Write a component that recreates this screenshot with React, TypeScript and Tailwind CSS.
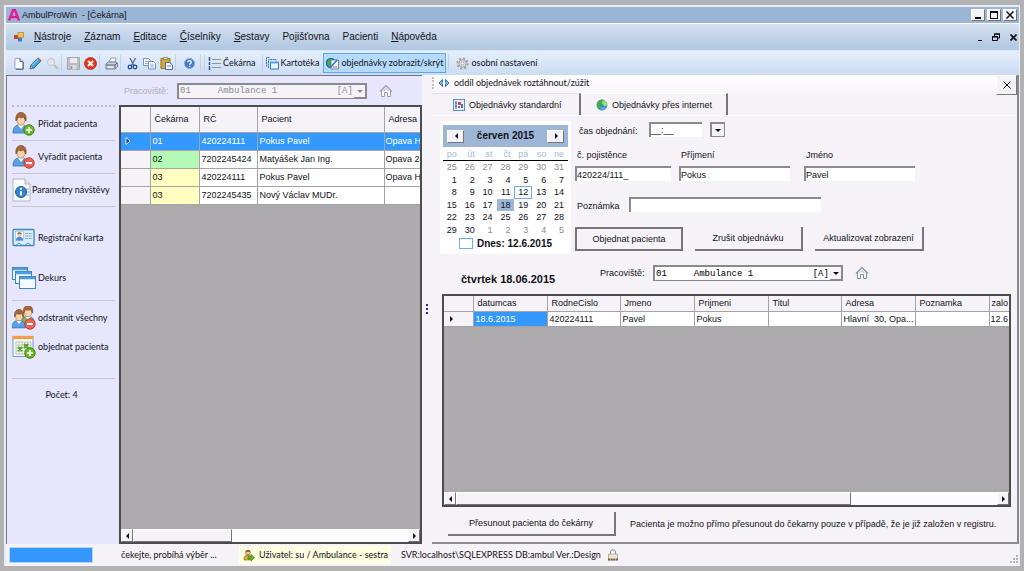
import React, { useState } from "react";

interface IconProps {
  className?: string;
}

const UI = "font-['Lato','Noto_Sans',sans-serif]";

const waiting = [
  { code: "01", rc: "420224111", name: "Pokus Pavel", address: "Opava H" },
  { code: "02", rc: "7202245424", name: "Matyášek Jan Ing.", address: "Opava 28" },
  { code: "03", rc: "420224111", name: "Pokus Pavel", address: "Opava H" },
  { code: "03", rc: "7202245435", name: "Nový Václav MUDr.", address: "" },
];

const days = [
  25, 26, 27, 28, 29, 30, 31, 1, 2, 3, 4, 5, 6, 7, 8, 9, 10, 11, 12, 13, 14, 15,
  16, 17, 18, 19, 20, 21, 22, 23, 24, 25, 26, 27, 28, 29, 30, 1, 2, 3, 4, 5,
];

const menu = [
  ["N", "ástroje"],
  ["Z", "áznam"],
  ["E", "ditace"],
  ["Č", "íselníky"],
  ["S", "estavy"],
  ["", "Pojišťovna"],
  ["", "Pacienti"],
  ["N", "ápověda"],
];

/* ---------- icons ---------- */

function PersonShape({ hair = "#a5683a", shirt = "#5b9fe6" }: { hair?: string; shirt?: string }) {
  return (
    <g>
      <path d="M1 21c0-5 2-8 6-8h3c4 0 6 3 6 8z" fill={shirt} stroke="#2f6fb8" strokeWidth="0.8" />
      <path d="M6 13l3 4 3-4z" fill="#fff" />
      <ellipse cx="9" cy="8" rx="4" ry="5.2" fill="#fbd3a8" stroke="#a06a3c" strokeWidth="0.6" />
      <path d="M4 9c-1-6 2-8.500 5-8.500s6 2.500 5 8.500c-1-1-1.500-3-2-4-2 1-4 1-6 0-.5 1-1 3-2 4z" fill={hair} stroke="#6d3e17" strokeWidth="0.6" />
    </g>
  );
}

function PlusBadge() {
  return (
    <g>
      <circle cx="17" cy="18" r="5.200" fill="#6cba25" stroke="#3d8510" />
      <path d="M17 15v6M14 18h6" stroke="#fff" strokeWidth="1.700" />
    </g>
  );
}

function MinusBadge() {
  return (
    <g>
      <circle cx="17" cy="18" r="5.200" fill="#ea6258" stroke="#c43a30" />
      <path d="M14 18h6" stroke="#fff" strokeWidth="2" />
    </g>
  );
}

function AddPersonIcon() {
  return (
    <svg viewBox="0 0 24 24" className="size-6">
      <PersonShape />
      <PlusBadge />
    </svg>
  );
}

function RemovePersonIcon() {
  return (
    <svg viewBox="0 0 24 24" className="size-6">
      <PersonShape />
      <MinusBadge />
    </svg>
  );
}

function RemoveAllIcon() {
  return (
    <svg viewBox="0 0 24 24" className="size-6">
      <g transform="translate(8 -1) scale(.9)">
        <PersonShape shirt="#7cb653" />
      </g>
      <g transform="translate(-1 3) scale(.9)">
        <PersonShape />
      </g>
      <g transform="translate(1 0)">
        <MinusBadge />
      </g>
    </svg>
  );
}

function InfoPageIcon() {
  return (
    <svg viewBox="0 0 24 24" className="size-6">
      <path d="M1 1h12l5 5v17H1z" fill="#fbfbfd" stroke="#b4b4bc" />
      <path d="M13 1v5h5" fill="#e4e4ea" stroke="#b4b4bc" />
      <path d="M14 11h3M15 14h2M14 17h3" stroke="#7fb0df" />
      <circle cx="9" cy="14" r="5.500" fill="#3583cf" stroke="#1f5fa6" />
      <path d="M9 13v4.500" stroke="#fff" strokeWidth="1.800" />
      <circle cx="9" cy="10.800" r="1.100" fill="#fff" />
    </svg>
  );
}

function CardIcon() {
  return (
    <svg viewBox="0 0 24 24" className="size-6">
      <rect x="1" y="3.500" width="21" height="16" rx="1" fill="#d9edfb" stroke="#3f86c4" strokeWidth="1.300" />
      <rect x="3.500" y="5.500" width="8" height="9" fill="#fff" stroke="#8ab8dd" strokeWidth="0.6" />
      <path d="M4 14.500c0-3 1.500-4 3.500-4s3.500 1 3.500 4z" fill="#4d90d6" />
      <circle cx="7.500" cy="8.800" r="2" fill="#f4c593" />
      <path d="M5.300 8.500c0-3 4.400-3 4.400 0-1-1.300-3.400-1.300-4.400 0z" fill="#6d3e17" />
      <path d="M13 7.500h7M13 10h7M13 12.500h7" stroke="#86abc9" strokeDasharray="3 .6" />
      <path d="M5 19.500c0-3 4-3 4 0zM14 19.500c0-3 4-3 4 0z" fill="#e6e6ff" stroke="#3f86c4" />
    </svg>
  );
}

function WindowsIcon() {
  return (
    <svg viewBox="0 0 24 24" className="size-6">
      <g fill="#f2f9ff" stroke="#3c87c8">
        <rect x="0.500" y="1.500" width="15" height="12" />
        <path d="M1 3h14" stroke="#4e9ede" strokeWidth="2.500" />
        <rect x="3.500" y="5.500" width="16" height="12" />
        <path d="M4 7h15" stroke="#4e9ede" strokeWidth="2.500" />
        <rect x="7.500" y="10.500" width="16" height="12" />
        <path d="M8 12h15" stroke="#4e9ede" strokeWidth="2.500" />
      </g>
    </svg>
  );
}

function CardFileIcon() {
  return (
    <svg viewBox="0 0 13 13" className="size-[13px]" fill="#eaf5ff" stroke="#2f78b8">
      <path d="M.5 9.500V.5h3M2.500 11V2.500h7.500v2" fill="none" strokeDasharray="2 .5" />
      <path d="M4.500 5.500h8v6.500h-8z" />
      <path d="M4 5.500h9" stroke="#4e9ede" strokeWidth="1.800" />
    </svg>
  );
}

function CalendarAddIcon() {
  return (
    <svg viewBox="0 0 24 24" className="size-6">
      <rect x="1" y="1.500" width="20" height="20" fill="#f3f9fd" stroke="#6fa2c9" />
      <path d="M0.500 2.500h21" stroke="#f0a04b" strokeWidth="3.400" />
      <path d="M4 7h15v12H4zM4 10h15M4 13h15M4 16h15M7 7v12M10 7v12M13 7v12M16 7v12" fill="#fff" stroke="#a9b9a8" strokeWidth="0.8" />
      <path d="M6 12l4 4M10 12l-4 4M12 9l4 4M16 9l-4 4" stroke="#55a31d" strokeWidth="2" />
      <g transform="translate(1 0)">
        <PlusBadge />
      </g>
    </svg>
  );
}

function HouseIcon({ className = "" }: IconProps) {
  return (
    <svg viewBox="0 0 14 14" className={`size-3.5 shrink-0 ${className}`} fill="none" stroke="currentColor">
      <path d="M1 7.500L7 1.500l6 6" strokeWidth="1.200" />
      <path d="M2.500 7v5.500h3V8.500h3v4h3V7" fill="#fff" />
      <path d="M4 7.500l3-3 3 3" strokeWidth="0.6" />
    </svg>
  );
}

function GlobeIcon({ className = "" }: IconProps) {
  return (
    <svg viewBox="0 0 14 14" className={className}>
      <circle cx="7" cy="7" r="6" fill="#2c86d4" stroke="#3a7fb8" strokeWidth="0.6" />
      <path d="M2 3c2-2 5-2.500 6-1.500L7 4l1 2-3 1 2 3-2 3C1 11 .5 6 2 3z" fill="#3fae4c" />
      <path d="M8 1.500c4 0 5.500 4 4.500 7L9 8 7 5z" fill="#a6dc6f" />
      <path d="M5 10l5-1 2 1c-1 2-3 3.500-6 3z" fill="#57a5e6" />
    </svg>
  );
}

function PageIcon() {
  return (
    <svg viewBox="0 0 13 13" className="size-[13px]">
      <path d="M3 1.500h5l3 3v7.500H3z" fill="#fff" stroke="#9aa2c4" />
      <path d="M11.200 5v7.200H4M8 1.500v3h3" fill="none" stroke="#4c5686" />
    </svg>
  );
}

function PencilIcon() {
  return (
    <svg viewBox="0 0 13 13" className="size-[13px]">
      <path d="M1 12l1-4 7-7 3 3-7 7z" fill="#3aa3ea" stroke="#17609f" strokeWidth="0.8" />
      <path d="M3 8.500l6.500-6.500" stroke="#b8e2fb" />
      <path d="M8.500 1.500l1-1 3 3-1 1z" fill="#e14b42" />
      <path d="M1 12l.8-3 2.200 2.200z" fill="#f6d19c" stroke="#5f432a" strokeWidth="0.5" />
    </svg>
  );
}

function SearchIcon() {
  return (
    <svg viewBox="0 0 13 13" className="size-[13px]">
      <circle cx="5" cy="5" r="3.500" fill="#e5e6ea" stroke="#c8cad2" strokeWidth="1.300" />
      <path d="M8 8l4 4" stroke="#c4bebc" strokeWidth="2.200" />
    </svg>
  );
}

function SaveIcon() {
  return (
    <svg viewBox="0 0 13 13" className="size-[13px]">
      <path d="M.5.5h12v12H.5z" fill="#bcbec3" stroke="#a6a8ad" />
      <path d="M3 1h7v5H3z" fill="#ececee" />
      <path d="M3.500 8h6v4.500h-6z" fill="#dadbdf" />
      <path d="M4.500 9v3" stroke="#95979e" strokeWidth="1.500" />
    </svg>
  );
}

function StopIcon() {
  return (
    <svg viewBox="0 0 13 13" className="size-[13px]">
      <circle cx="6.500" cy="6.500" r="6" fill="#e8341f" stroke="#b51f10" strokeWidth="0.7" />
      <path d="M4 4l5 5M9 4l-5 5" stroke="#fff" strokeWidth="2" />
    </svg>
  );
}

function PrinterIcon() {
  return (
    <svg viewBox="0 0 13 13" className="size-[13px]">
      <path d="M4 5l2-4h5l-1 4z" fill="#fff" stroke="#7e88a8" strokeWidth="0.8" />
      <path d="M1 7l2-2h8l1.500 1v4L10 12H1z" fill="#c8cdd8" stroke="#626b86" strokeWidth="0.8" />
      <path d="M1 8h9v3.500M10 8l2-2" fill="none" stroke="#5c6580" />
      <path d="M3 10h5" stroke="#fff" />
    </svg>
  );
}

function CutIcon() {
  return (
    <svg viewBox="0 0 13 13" className="size-[13px]">
      <path d="M4 1l4 8M9.500 1l-4 8" stroke="#48649b" strokeWidth="1.200" />
      <circle cx="4" cy="10" r="1.800" fill="none" stroke="#24499b" strokeWidth="1.300" />
      <circle cx="9" cy="10" r="1.800" fill="none" stroke="#24499b" strokeWidth="1.300" />
    </svg>
  );
}

function CopyIcon() {
  return (
    <svg viewBox="0 0 13 13" className="size-[13px]" fill="#f3f8ff" stroke="#7391c6">
      <path d="M.5 1.500h5l2 2v5h-7z" />
      <path d="M2 4.500h3M2 6.500h3" strokeWidth="0.700" />
      <path d="M5.500 4.500h5l2 2v5.500h-7z" />
      <path d="M7 8h4M7 10h4" strokeWidth="0.700" />
    </svg>
  );
}

function PasteIcon() {
  return (
    <svg viewBox="0 0 13 13" className="size-[13px]">
      <path d="M1 1.500h9v10H1z" fill="#d6a83c" stroke="#94701c" />
      <path d="M3.500.5h4v2h-4z" fill="#e9e5d0" stroke="#77725c" strokeWidth="0.700" />
      <path d="M5.500 5.500h4l3 2.500v4.500h-7z" fill="#eef4ff" stroke="#4f6ba8" />
      <path d="M7 9h4" stroke="#6e89c2" />
    </svg>
  );
}

function HelpIcon() {
  return (
    <svg viewBox="0 0 13 13" className="size-[13px]">
      <circle cx="6.500" cy="6.500" r="5" fill="#3e78d6" stroke="#88a6d8" />
      <path d="M4.800 5.200c0-2.200 3.500-2.200 3.500 0 0 1.200-1.700 1.200-1.700 2.500M6.600 8.800v1.200" fill="none" stroke="#fff" strokeWidth="1.300" />
    </svg>
  );
}

function ListIcon() {
  return (
    <svg viewBox="0 0 13 13" className="size-[13px]">
      <path d="M1.500 0v4M1.500 5v3M1.500 9v4" stroke="#2a57a8" strokeWidth="1.500" />
      <path d="M4 2.500h9M4 6.500h9M4 10.500h9" stroke="#8c94a0" />
    </svg>
  );
}

function ChartPageIcon() {
  return (
    <svg viewBox="0 0 13 13" className="size-[13px]">
      <circle cx="5" cy="6" r="4.600" fill="#49a948" stroke="#1d6bab" strokeWidth="1.200" />
      <path d="M5 3h7.500v9H5z" fill="#f6f9ff" stroke="#54719f" strokeWidth="0.800" />
      <path d="M4 11l7-8" stroke="#2a7fcf" strokeWidth="1.700" />
      <path d="M7 10h4" stroke="#d3584a" />
    </svg>
  );
}

function GearIcon() {
  return (
    <svg viewBox="0 0 13 13" className="size-[13px]">
      <circle cx="6.500" cy="6.500" r="5" fill="none" stroke="#a0a0a2" strokeWidth="2.200" strokeDasharray="2 1.900" />
      <circle cx="6.500" cy="6.500" r="3.700" fill="#e3e3e5" stroke="#a2a2a5" />
      <circle cx="6.500" cy="6.500" r="1.600" fill="#fff" stroke="#a2a2a5" />
    </svg>
  );
}

function StandardIcon() {
  return (
    <svg viewBox="0 0 12 12" className="size-3">
      <rect x="0.500" y="0.500" width="11" height="11" fill="#e8f2fb" stroke="#5a93c9" />
      <path d="M3 2v8M2 4h2M2 7h2" stroke="#47608c" />
      <path d="M5 3h3v3H5z" fill="#cb4b55" />
      <path d="M5 7h2v2H5zM8 5h2v4H8z" fill="#5d6da8" />
    </svg>
  );
}

function UserGoIcon() {
  return (
    <svg viewBox="0 0 12 12" className="size-3">
      <path d="M1 11c0-4 1-5 4-5s4 1 4 5z" fill="#d9a93a" stroke="#8a6a1c" strokeWidth="0.600" />
      <circle cx="5" cy="3.500" r="2.300" fill="#f6cfa0" stroke="#7d4e22" strokeWidth="0.700" />
      <path d="M2.700 3.500c0-3.500 4.600-3.500 4.600 0C6 2.500 4 2.500 2.700 3.500z" fill="#7d4e22" />
      <path d="M5 7.500h3v-2l3.700 3.200L8 12v-2H5z" fill="#62b422" stroke="#3c8411" strokeWidth="0.600" />
    </svg>
  );
}

function LockIcon() {
  return (
    <svg viewBox="0 0 12 12" className="size-3">
      <path d="M3.500 5V3c0-3 5-3 5 0v2" fill="none" stroke="#8b8b8b" />
      <path d="M1.500 5h9v6h-9z" fill="#eee3d8" stroke="#a08f86" strokeWidth="0.700" />
      <path d="M1 10.500h10" stroke="#7a5b3a" strokeWidth="2" strokeDasharray="2 .7" />
    </svg>
  );
}

function Arrow({ dir }: { dir: "left" | "right" | "down" }) {
  const d = { left: "M5 0v6L2 3z", right: "M2 0v6l3-3z", down: "M0 2h6L3 5z" }[dir];
  return (
    <svg viewBox="0 0 6 6" className="size-1.5" fill="currentColor">
      <path d={d} />
    </svg>
  );
}

function Cross({ className = "size-2" }: IconProps) {
  return (
    <svg viewBox="0 0 8 8" className={className} stroke="currentColor" fill="none">
      <path d="M.5.5l7 7M7.500.5l-7 7" />
    </svg>
  );
}

/* ---------- small controls ---------- */

const raised =
  "border border-t-white border-l-white border-r-[#77757a] border-b-[#77757a] bg-[#f6f3f8] flex items-center justify-center";

const sunken = "h-[15px] border-t-2 border-l-2 border-[#8b898d] bg-white outline-none";

function Sep() {
  return <span className="h-4 w-1 shrink-0 border-l border-[#c3cfe2]" />;
}

function IconButton({ label, children }: { label: string; children: React.ReactNode }) {
  return (
    <button aria-label={label} className="flex w-[17px] shrink-0 items-center justify-center">
      {children}
    </button>
  );
}

function FormButton({ children, className = "" }: { children: React.ReactNode; className?: string }) {
  return (
    <button className={`h-6 border-[#77757a] bg-[#f6f3f8] text-center ${className}`}>
      {children}
    </button>
  );
}

function Field({ id, label, value, className = "" }: { id: string; label: string; value: string; className?: string }) {
  return (
    <div className={`flex flex-col gap-[5px] ${className}`}>
      <label htmlFor={id} className="pl-0.5">
        {label}
      </label>
      <input id={id} defaultValue={value} className={`w-full ${sunken}`} />
    </div>
  );
}

function WorkplaceSelect({ id, muted }: { id: string; muted?: boolean }) {
  return (
    <div className={`relative ${muted ? "text-[#8d8b90]" : "text-black"}`}>
      <select
        id={id}
        disabled={muted}
        className={`block h-4 w-[190px] appearance-none border-2 border-r border-b border-[#8b898d] pl-px font-['Liberation_Mono',monospace] text-[9px] leading-3 opacity-100 outline-none ${
          muted ? "bg-[#f6f3f8]" : "bg-white"
        }`}
      >
        <option>{"01" + "\u00a0".repeat(5) + "Ambulance 1" + "\u00a0".repeat(11) + "[A]"}</option>
      </select>
      <span className="pointer-events-none absolute top-0.5 right-px flex h-[13px] w-3 items-center justify-center border-r border-b border-[#8b898d] bg-[#f6f3f8]">
        <Arrow dir="down" />
      </span>
    </div>
  );
}

function ScrollBar({ thumb }: { thumb: string }) {
  return (
    <div className="flex h-[13px] shrink-0 bg-[#fcfbfd]">
      <button aria-label="Posunout vlevo" className={`w-3 ${raised}`}>
        <Arrow dir="left" />
      </button>
      <div className="flex-1">
        <div className={`h-full ${thumb} ${raised}`} />
      </div>
      <button aria-label="Posunout vpravo" className={`w-3 ${raised}`}>
        <Arrow dir="right" />
      </button>
    </div>
  );
}

function SideButton({ icon, children, className = "" }: { icon: React.ReactNode; children: React.ReactNode; className?: string }) {
  return (
    <button className={`flex w-full items-center gap-0.5 text-left whitespace-nowrap ${className}`}>
      <span className="shrink-0">{icon}</span>
      {children}
    </button>
  );
}

/* ---------- sections ---------- */

function TitleBar() {
  return (
    <header className="flex h-4 shrink-0 items-center bg-[#9bb5d4] pr-0.5 pl-0.5">
      <svg viewBox="0 0 12 12" className="size-3" fill="none" stroke="#e6189a" strokeWidth="2.400">
        <path d="M1 11.500L5 1.200h2l4 10.300M3 8h6" />
      </svg>
      <h1 className="ml-0.5 flex-1 whitespace-pre">AmbulProWin  - [Čekárna]</h1>
      <div className="flex gap-0.5">
        <button aria-label="Minimalizovat" className={`h-3 w-3.5 ${raised}`}>
          <span className="mt-1.5 h-0.5 w-1.5 bg-black" />
        </button>
        <button aria-label="Maximalizovat" className={`h-3 w-3.5 ${raised}`}>
          <span className="size-2 border border-t-2 border-black" />
        </button>
        <button aria-label="Zavřít" className={`h-3 w-3.5 ${raised}`}>
          <Cross className="size-2 stroke-[1.5]" />
        </button>
      </div>
    </header>
  );
}

function MenuBar() {
  return (
    <nav className="flex h-[27px] shrink-0 items-center border-t border-white bg-linear-to-b from-[#d5e1f1] to-[#afc7e1] pr-0.5 pl-2 text-[10px]">
      <svg viewBox="0 0 10 10" className="mr-2.5 size-2.5">
        <rect x="0" y="3" width="4" height="4" fill="#c8452d" />
        <rect x="4" y="0.500" width="5.500" height="5" fill="#f4c94b" stroke="#9c7b1c" strokeWidth="0.600" />
        <rect x="4" y="6" width="4" height="3.500" fill="#4978c9" />
      </svg>
      <div className="flex flex-1 gap-[13px]">
        {menu.map(([key, rest]) => (
          <button key={key + rest}>
            <span className="underline">{key}</span>
            {rest}
          </button>
        ))}
      </div>
      <div className="flex items-center gap-2.5">
        <button aria-label="Minimalizovat okno" className="flex h-2 items-end">
          <span className="h-px w-1 bg-black" />
        </button>
        <button aria-label="Obnovit okno">
          <svg viewBox="0 0 8 8" className="size-2" fill="none" stroke="#000">
            <path d="M2.500 3V1h5v4H6M.5 3.500h5v4h-5zM2 1h6M0 4h6" />
          </svg>
        </button>
        <button aria-label="Zavřít okno">
          <Cross className="size-[7px] stroke-2" />
        </button>
      </div>
    </nav>
  );
}

function ToolBar() {
  return (
    <div className={`flex h-[25px] shrink-0 items-center border-t border-[#dbe6f5] bg-linear-to-b from-[#e6effc] to-[#cadcf3] pl-1 ${UI}`}>
      <IconButton label="Nový"><PageIcon /></IconButton>
      <IconButton label="Upravit"><PencilIcon /></IconButton>
      <IconButton label="Hledat"><SearchIcon /></IconButton>
      <Sep />
      <IconButton label="Uložit"><SaveIcon /></IconButton>
      <IconButton label="Storno"><StopIcon /></IconButton>
      <Sep />
      <IconButton label="Tisk"><PrinterIcon /></IconButton>
      <Sep />
      <IconButton label="Vyjmout"><CutIcon /></IconButton>
      <IconButton label="Kopírovat"><CopyIcon /></IconButton>
      <IconButton label="Vložit"><PasteIcon /></IconButton>
      <Sep />
      <span className="mx-0.5 flex"><IconButton label="Pomoc"><HelpIcon /></IconButton></span>
      <Sep />
      <Sep />
      <button className="mr-1.5 flex items-center gap-0.5"><ListIcon />Čekárna</button>
      <Sep />
      <button className="mr-1 flex items-center gap-0.5"><CardFileIcon />Kartotéka</button>
      <button className="mr-0.5 flex h-5 items-center gap-0.5 border border-[#5aa9ea] bg-[#b5dafb] px-0.5">
        <ChartPageIcon />
        objednávky zobrazit/skrýt
      </button>
      <Sep />
      <button className="ml-1 flex items-center gap-0.5"><GearIcon />osobní nastavení</button>
    </div>
  );
}

function SideBar() {
  return (
    <aside className={`flex w-[113px] shrink-0 flex-col border-t border-l border-[#77757a] bg-[#e6e6ff] pt-[29px] pr-1 pl-[5px] ${UI}`}>
      <div className="border-t-2 border-dotted border-[#bcbcd0]" />
      <SideButton icon={<AddPersonIcon />} className="h-[33px]">Přidat pacienta</SideButton>
      <div className="border-t border-[#c6c6d2]" />
      <SideButton icon={<RemovePersonIcon />} className="h-8">Vyřadit pacienta</SideButton>
      <div className="border-t border-[#c6c6d2]" />
      <button className="flex h-8 items-center text-left whitespace-nowrap">
        <span className="-mr-1 shrink-0"><InfoPageIcon /></span>
        Parametry návštěvy
      </button>
      <div className="border-t border-[#c6c6d2]" />
      <SideButton icon={<CardIcon />} className="mt-[15px] h-8">Registrační karta</SideButton>
      <SideButton icon={<WindowsIcon />} className="mt-2 h-8">Dekurs</SideButton>
      <div className="mt-1.5 border-t border-[#c6c6d2]" />
      <SideButton icon={<RemoveAllIcon />} className="mt-0.5 h-[30px]">odstranit všechny</SideButton>
      <SideButton icon={<CalendarAddIcon />} className="h-7">objednat pacienta</SideButton>
      <div className="mt-[17px] border-t border-[#c6c6d2]" />
      <p className="mt-2.5 pr-1 text-center">Počet: 4</p>
    </aside>
  );
}

function WaitingRoom() {
  const [selected, setSelected] = useState(0);
  return (
    <section className="flex w-[303px] shrink-0 flex-col border-t border-[#77757a]">
      <div className="flex h-[29px] shrink-0 items-center bg-[#e6e6ff] pl-[5px]">
        <label htmlFor="workplace-left" className="w-[53px] text-[#b1afbb]">Pracoviště:</label>
        <WorkplaceSelect id="workplace-left" muted />
        <HouseIcon className="ml-3 text-[#a09da6]" />
      </div>
      <div className="flex min-h-0 flex-1 flex-col border-2 border-[#4c4b4e] bg-[#acaaac]">
        <div className="min-h-0 flex-1 overflow-hidden">
          <table className="w-full table-fixed border-collapse text-left">
            <colgroup>
              <col className="w-[29px]" />
              <col className="w-[49px]" />
              <col className="w-[58px]" />
              <col className="w-[127px]" />
              <col />
            </colgroup>
            <thead>
              <tr className="h-[25px] bg-[#f6f3f8]">
                <th className="border-r border-b border-[#a5a3a8]" />
                <th className="border-r border-b border-[#a5a3a8] pl-1 font-normal">Čekárna</th>
                <th className="border-r border-b border-[#a5a3a8] pl-1 font-normal">RČ</th>
                <th className="border-r border-b border-[#a5a3a8] pl-1 font-normal">Pacient</th>
                <th className="border-b border-[#a5a3a8] pl-1 font-normal">Adresa</th>
              </tr>
            </thead>
            <tbody>
              {waiting.map((row, i) => (
                <tr
                  key={i}
                  onClick={() => setSelected(i)}
                  className={`h-[18px] whitespace-nowrap ${i === selected ? "bg-[#3399ff] text-white" : "bg-white"}`}
                >
                  <td className={`border-r border-b border-[#a5a3a8] pl-1 ${i === selected ? "" : "bg-[#f6f3f8]"}`}>
                    {i === selected && (
                      <svg viewBox="0 0 6 8" className="h-2 w-1.5" fill="#1b3c6e" stroke="#fff" strokeWidth="0.800">
                        <path d="M1 .5v7L5 4z" />
                      </svg>
                    )}
                  </td>
                  <td
                    className={`border-r border-b border-[#a5a3a8] pl-0.5 ${
                      i === selected ? "" : row.code === "02" ? "bg-[#b4fab4]" : "bg-[#ffffc0]"
                    }`}
                  >
                    {row.code}
                  </td>
                  <td className="border-r border-b border-[#a5a3a8] pl-0.5">{row.rc}</td>
                  <td className="border-r border-b border-[#a5a3a8] pl-0.5">{row.name}</td>
                  <td className="border-b border-[#a5a3a8] pl-px">{row.address}</td>
                </tr>
              ))}
            </tbody>
          </table>
        </div>
        <ScrollBar thumb="w-[99px]" />
      </div>
    </section>
  );
}

function MonthCalendar() {
  return (
    <div className="h-[133px] w-[131px] shrink-0 bg-white px-[3px] pt-1">
      <div className="flex h-[22px] items-center justify-between bg-[#9db6d6] px-1 text-[10px] font-bold">
        <button aria-label="Předchozí měsíc" className={`h-[13px] w-[17px] ${raised}`}><Arrow dir="left" /></button>
        červen 2015
        <button aria-label="Další měsíc" className={`h-[13px] w-[17px] ${raised}`}><Arrow dir="right" /></button>
      </div>
      <div className="grid h-[14px] grid-cols-7 items-end border-b border-black text-right text-[#a3bbdb]">
        {["po", "út", "st", "čt", "pá", "so", "ne"].map((d) => (
          <span key={d} className="pr-1">{d}</span>
        ))}
      </div>
      <div className="grid h-[75px] grid-cols-7 grid-rows-6 text-right">
        {days.map((d, i) => (
          <button
            key={i}
            className={`flex items-center justify-end pr-1 ${i < 7 || i > 36 ? "text-[#8c8a8e]" : ""} ${
              i === 18 ? "border border-[#6cb0ee] pr-[3px]" : ""
            } ${i === 24 ? "bg-[#9db6d6]" : ""}`}
          >
            {d}
          </button>
        ))}
      </div>
      <div className="flex h-[15px] items-center justify-center gap-1 text-[10px] font-bold">
        <span className="h-[11px] w-3.5 border border-[#6cb0ee]" />
        Dnes: 12.6.2015
      </div>
    </div>
  );
}

const apptColumns = ["datumcas", "RodneCislo", "Jmeno", "Prijmeni", "Titul", "Adresa", "Poznamka"];
const apptRow = ["18.6.2015", "420224111", "Pavel", "Pokus", "", "Hlavní  30, Opa...", ""];

function Appointments() {
  return (
    <section className="flex min-w-0 flex-1 flex-col border-r-2 border-b-2 border-[#8b898d] bg-[#f6f3f8]">
      <div className={`flex h-[18px] shrink-0 items-start justify-between bg-linear-to-b from-white to-[#f8f5fa] ${UI}`}>
        <button className="flex h-4 items-center gap-1">
          <span className="h-3 border-l-2 border-dotted border-[#c0bdc6]" />
          <svg viewBox="0 0 12 8" className="h-2 w-3" fill="#8fc0ee" stroke="#2a6cb5">
            <path d="M4.500.5L1 4l3.500 3.500V5L3.500 4l1-1zM7.500.5L11 4 7.500 7.500V5l1-1-1-1z" />
          </svg>
          oddíl objednávek roztáhnout/zúžit
        </button>
        <button aria-label="Zavřít oddíl" className={`h-5 w-[21px] ${raised}`}>
          <Cross />
        </button>
      </div>
      <div className="flex h-[23px] shrink-0 items-stretch border-b border-[#fdfcfe]">
        <button className="flex w-[149px] items-center gap-1 border-t border-r-2 border-t-[#e4e1e6] border-r-[#77757a] pl-[21px]">
          <StandardIcon />
          Objednávky standardní
        </button>
        <button className="flex w-[147px] items-center gap-1 border-t border-r-2 border-t-white border-r-[#77757a] pl-[15px]">
          <GlobeIcon className="size-3" />
          Objednávky přes internet
        </button>
      </div>

      <div className="flex flex-1 flex-col pt-[5px] pr-1.5 pl-2">
        <div className="flex shrink-0 gap-1">
          <MonthCalendar />
          <form className="flex flex-col" onSubmit={(e) => e.preventDefault()}>
            <div className="flex h-4 items-center">
              <label htmlFor="time" className="w-[74px] pt-1 pl-1">čas objednání:</label>
              <input id="time" defaultValue="__:__" className={`w-[53px] ${sunken}`} />
              <button aria-label="Vybrat čas" className="ml-2 flex size-[15px] items-center justify-center border-2 border-r border-b border-[#8b898d] text-black">
                <Arrow dir="down" />
              </button>
            </div>
            <div className="mt-3 flex">
              <Field id="insurance" label="č. pojistěnce" value="420224/111_" className="w-[96px]" />
              <Field id="surname" label="Příjmení" value="Pokus" className="ml-2 w-[111px]" />
              <Field id="firstname" label="Jméno" value="Pavel" className="ml-3.5 w-[111px]" />
            </div>
            <div className="mt-4 flex items-center">
              <label htmlFor="note" className="w-[54px] pt-0.5 pl-0.5">Poznámka</label>
              <input id="note" className={`w-[192px] ${sunken}`} />
            </div>
            <div className="mt-[15px] flex gap-3">
              <FormButton className="w-[108px] border-2 border-[#4c4b4e]">Objednat pacienta</FormButton>
              <FormButton className="w-[108px] border-r-2 border-b-2">Zrušit objednávku</FormButton>
              <FormButton className="w-[109px] border-r-2 border-b-2">Aktualizovat zobrazení</FormButton>
            </div>
          </form>
        </div>

        <div className="mt-2.5 flex h-[18px] shrink-0 items-center">
          <h2 className="w-[160px] pt-3 pl-[21px] text-[11px] font-bold">čtvrtek 18.06.2015</h2>
          <label htmlFor="workplace" className="w-[53px]">Pracoviště:</label>
          <WorkplaceSelect id="workplace" />
          <HouseIcon className="ml-3 text-[#7f90a5]" />
        </div>

        <div className="mt-3 ml-0.5 flex min-h-0 flex-1 flex-col border-2 border-[#4c4b4e] bg-[#acaaac]">
          <div className="min-h-0 flex-1 overflow-hidden">
            <table className="w-full table-fixed border-collapse text-left">
              <colgroup>
                <col className="w-[29px]" />
                <col className="w-[74px]" />
                <col className="w-[73px]" />
                <col className="w-[74px]" />
                <col className="w-[74px]" />
                <col className="w-[73px]" />
                <col className="w-[74px]" />
                <col className="w-[74px]" />
                <col />
              </colgroup>
              <thead>
                <tr className="h-[15px] bg-[#f6f3f8]">
                  <th className="border-r border-b border-[#a5a3a8]" />
                  {apptColumns.map((c) => (
                    <th key={c} className="border-r border-b border-[#a5a3a8] pl-1 font-normal">{c}</th>
                  ))}
                  <th className="border-b border-[#a5a3a8] pl-0.5 font-normal">zalo</th>
                </tr>
              </thead>
              <tbody>
                <tr className="h-[15px] bg-white whitespace-pre">
                  <td className="border-r border-b border-[#a5a3a8] bg-[#f6f3f8] pl-1"><Arrow dir="right" /></td>
                  {apptRow.map((v, i) => (
                    <td key={i} className={`border-r border-b border-[#a5a3a8] pl-0.5 ${i === 0 ? "bg-[#3399ff] text-white" : ""}`}>
                      {v}
                    </td>
                  ))}
                  <td className="border-b border-[#a5a3a8] pl-px">12.6</td>
                </tr>
              </tbody>
            </table>
          </div>
          <ScrollBar thumb="w-[73%]" />
        </div>

        <div className="mt-[5px] mb-1.5 ml-2 flex shrink-0 items-center gap-3.5">
          <FormButton className="w-[168px] border-r-2 border-b-2">Přesunout pacienta do čekárny</FormButton>
          <p>Pacienta je možno přímo přesunout do čekarny pouze v případě, že je již založen v registru.</p>
        </div>
      </div>
    </section>
  );
}

function StatusBar() {
  return (
    <footer className={`relative flex h-[22px] shrink-0 items-center pl-[3px] ${UI}`}>
      <div role="progressbar" aria-label="Průběh" className="h-4 w-[84px] border border-[#b9d4ee] bg-[#3399ff]" />
      <span className="ml-7 w-[118px]">čekejte, probíhá výběr ...</span>
      <span className="flex h-[18px] w-[152px] items-center gap-1 bg-[#ffffe1] pl-1"><UserGoIcon />Uživatel: su / Ambulance - sestra</span>
      <span className="mr-1.5 ml-2.5">SVR:localhost\SQLEXPRESS DB:ambul Ver.:Design</span>
      <LockIcon />
      <svg viewBox="0 0 9 9" className="absolute right-0 bottom-0.5 size-[9px]" fill="#b5b2b8">
        <path d="M6 0h2v2H6zM6 3h2v2H6zM6 6h2v2H6zM3 3h2v2H3zM3 6h2v2H3zM0 6h2v2H0z" />
      </svg>
    </footer>
  );
}

export default function App() {
  return (
    <div className="flex h-screen w-full flex-col overflow-hidden border-x-4 border-t-[5px] border-b-[5px] border-[#b3b2b3] bg-[#f6f3f8] font-['Liberation_Sans',Arial,sans-serif] text-[9px] leading-3 text-[#111118]">
      <div className="flex min-h-0 flex-1 flex-col border-2 border-r border-b-0 border-[#e7eef8]">
        <TitleBar />
        <MenuBar />
        <ToolBar />
        <main className="flex min-h-0 flex-1">
          <SideBar />
          <WaitingRoom />
          <div className="flex w-2.5 shrink-0 items-center justify-center">
            <svg viewBox="0 0 2 11" className="h-[11px] w-0.5" fill="#2f2d9c">
              <path d="M0 0h2v2H0zM0 4h2v2H0zM0 8h2v2H0z" />
            </svg>
          </div>
          <Appointments />
        </main>
        <StatusBar />
      </div>
    </div>
  );
}
